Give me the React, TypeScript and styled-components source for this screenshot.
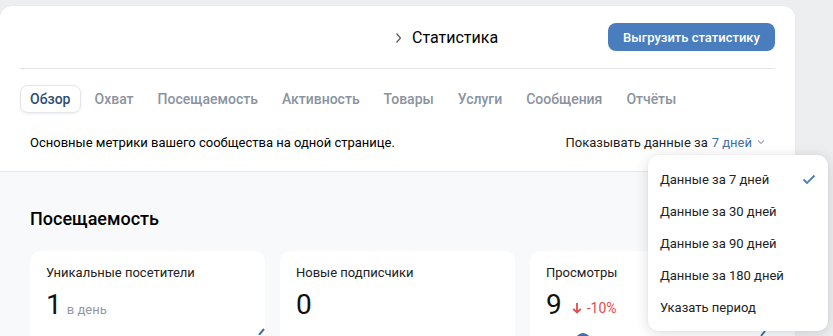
import React from "react";
import styled, { createGlobalStyle } from "styled-components";

const Global = createGlobalStyle`
  html, body { margin: 0; padding: 0; background: #edeef0; }
  body { font-family: Roboto, "Noto Sans", Arial, sans-serif; -webkit-font-smoothing: antialiased; }
  #root { width: 833px; height: 336px; overflow: hidden; }
`;

const Page = styled.div`
  position: relative;
  width: 833px;
  height: 336px;
  padding-top: 6px;
  box-sizing: border-box;
  overflow: hidden;
`;

const Card = styled.div`
  width: 795px;
  background: #fff;
  border-radius: 12px;
  overflow: hidden;
  box-shadow: 0 0 2px rgba(0,0,0,0.06);
`;

const Head = styled.div`
  padding: 0 20px;
`;

const TitleRow = styled.div`
  display: flex;
  align-items: center;
  height: 62px;
  border-bottom: 1px solid #e2e4e8;
`;

const Crumb = styled.div`
  display: flex;
  align-items: center;
  gap: 10px;
  margin-left: 375px;
  font-size: 16px;
  color: #000;
  padding-top: 1px;
`;

const Export = styled.button`
  margin-left: auto;
  height: 28px;
  width: 167px;
  border: none;
  border-radius: 8px;
  background: #4a7dbd;
  color: #fff;
  font-family: Roboto, Arial, sans-serif;
  font-weight: 500;
  font-size: 13px;
  padding: 0;
`;

const Tabs = styled.div`
  display: flex;
  align-items: center;
  gap: 4px;
  margin-top: 16px;
`;

const Tab = styled.div<{ $active?: boolean }>`
  height: 26px;
  display: flex;
  align-items: center;
  padding: 0 9px;
  border-radius: 8px;
  font-size: 14px;
  font-weight: 500;
  color: ${(p) => (p.$active ? "#2c4d70" : "#8a939e")};
  border: 1px solid ${(p) => (p.$active ? "#e3e6ea" : "transparent")};
  box-shadow: ${(p) => (p.$active ? "0 1px 3px rgba(0,0,0,0.08)" : "none")};
`;

const InfoRow = styled.div`
  display: flex;
  align-items: center;
  justify-content: space-between;
  padding: 0 9px 0 10px;
  height: 58px;
  font-size: 13px;
  color: #000;
`;

const Period = styled.div`
  display: flex;
  align-items: center;
  gap: 4px;
  color: #222;
`;

const Blue = styled.span`
  color: #3f6fa6;
`;

const Body = styled.div`
  background: #f8f9fb;
  border-top: 1px solid #e4e6ea;
  padding: 36px 30px 0 30px;
  height: 200px;
`;

const H2 = styled.div`
  font-size: 18px;
  font-weight: 500;
  color: #000;
  height: 22px;
  line-height: 22px;
`;

const Metrics = styled.div`
  display: grid;
  grid-template-columns: repeat(3, 235px);
  gap: 15px;
  margin-top: 21px;
`;

const Metric = styled.div`
  position: relative;
  background: #fff;
  border-radius: 10px;
  height: 120px;
  padding: 14px 16px;
  box-sizing: border-box;
`;

const Label = styled.div`
  font-size: 13px;
  color: #222;
`;

const Value = styled.div<{ $gap?: number }>`
  display: flex;
  align-items: baseline;
  gap: ${(p) => p.$gap ?? 5}px;
  margin-top: 8px;
`;

const Big = styled.span`
  font-size: 28px;
  color: #111;
  font-weight: 400;
`;

const Small = styled.span<{ $red?: boolean }>`
  font-size: ${(p) => (p.$red ? 14 : 13)}px;
  color: ${(p) => (p.$red ? "#e34b4b" : "#8f98a3")};
  display: inline-flex;
  align-items: center;
  gap: 5px;
`;

const Mark = styled.svg`
  position: absolute;
`;

const Menu = styled.div`
  position: absolute;
  left: 648px;
  top: 155px;
  width: 180px;
  background: #fff;
  border-radius: 10px;
  box-shadow: 0 2px 14px rgba(0,0,0,0.14), 0 0 2px rgba(0,0,0,0.06);
  padding: 8px 0;
  box-sizing: border-box;
`;

const Item = styled.div`
  height: 32px;
  display: flex;
  align-items: center;
  justify-content: space-between;
  padding: 0 12px 0 12px;
  font-size: 13px;
  color: #222;
`;

const tabs = ["Обзор", "Охват", "Посещаемость", "Активность", "Товары", "Услуги", "Сообщения", "Отчёты"];
const items = ["Данные за 7 дней", "Данные за 30 дней", "Данные за 90 дней", "Данные за 180 дней", "Указать период"];

export default function App() {
  return (
    <Page>
      <Global />
      <Card>
        <Head>
          <TitleRow>
            <Crumb>
              <svg width="7" height="12" viewBox="0 0 7 12">
                <path d="M1.5 1.5 L5.5 6 L1.5 10.5" fill="none" stroke="#555" strokeWidth="1.2" />
              </svg>
              Статистика
            </Crumb>
            <Export>Выгрузить статистику</Export>
          </TitleRow>
          <Tabs>
            {tabs.map((t, i) => (
              <Tab key={t} $active={i === 0}>{t}</Tab>
            ))}
          </Tabs>
          <InfoRow>
            <span>Основные метрики вашего сообщества на одной странице.</span>
            <Period>
              Показывать данные за <Blue>7 дней</Blue>
              <svg width="10" height="8" viewBox="0 0 10 8">
                <path d="M2 2.5 L5 5.5 L8 2.5" fill="none" stroke="#a0a8b2" strokeWidth="1.2" />
              </svg>
            </Period>
          </InfoRow>
        </Head>
        <Body>
          <H2>Посещаемость</H2>
          <Metrics>
            <Metric>
              <Label>Уникальные посетители</Label>
              <Value>
                <Big>1</Big>
                <Small>в день</Small>
              </Value>
              <Mark style={{ left: 228, top: 76 }} width="8" height="8" viewBox="0 0 8 8">
                <path d="M1 8 L6 2" stroke="#3f6fa6" strokeWidth="2" />
              </Mark>
            </Metric>
            <Metric>
              <Label>Новые подписчики</Label>
              <Value>
                <Big>0</Big>
              </Value>
            </Metric>
            <Metric>
              <Label>Просмотры</Label>
              <Value $gap={10}>
                <Big>9</Big>
                <Small $red>
                  <svg width="10" height="12" viewBox="0 0 10 12">
                    <path d="M5 1 V10.5 M1.2 6.8 L5 10.5 L8.8 6.8" fill="none" stroke="#e34b4b" strokeWidth="1.8" />
                  </svg>
                  -10%
                </Small>
              </Value>
              <Mark style={{ left: 44, top: 79 }} width="18" height="8" viewBox="0 0 18 8">
                <path d="M1 8 Q9 -2 17 8" fill="#3f6fa6" />
              </Mark>
              <Mark style={{ left: 230, top: 79 }} width="6" height="6" viewBox="0 0 6 6">
                <path d="M1 6 L5 1" stroke="#3f6fa6" strokeWidth="2" />
              </Mark>
            </Metric>
          </Metrics>
        </Body>
      </Card>
      <Menu>
        {items.map((t, i) => (
          <Item key={t}>
            {t}
            {i === 0 && (
              <svg width="14" height="11" viewBox="0 0 14 11">
                <path d="M1.5 5.5 L5 9 L12.5 1.5" fill="none" stroke="#4a7dbd" strokeWidth="1.8" />
              </svg>
            )}
          </Item>
        ))}
      </Menu>
    </Page>
  );
}
